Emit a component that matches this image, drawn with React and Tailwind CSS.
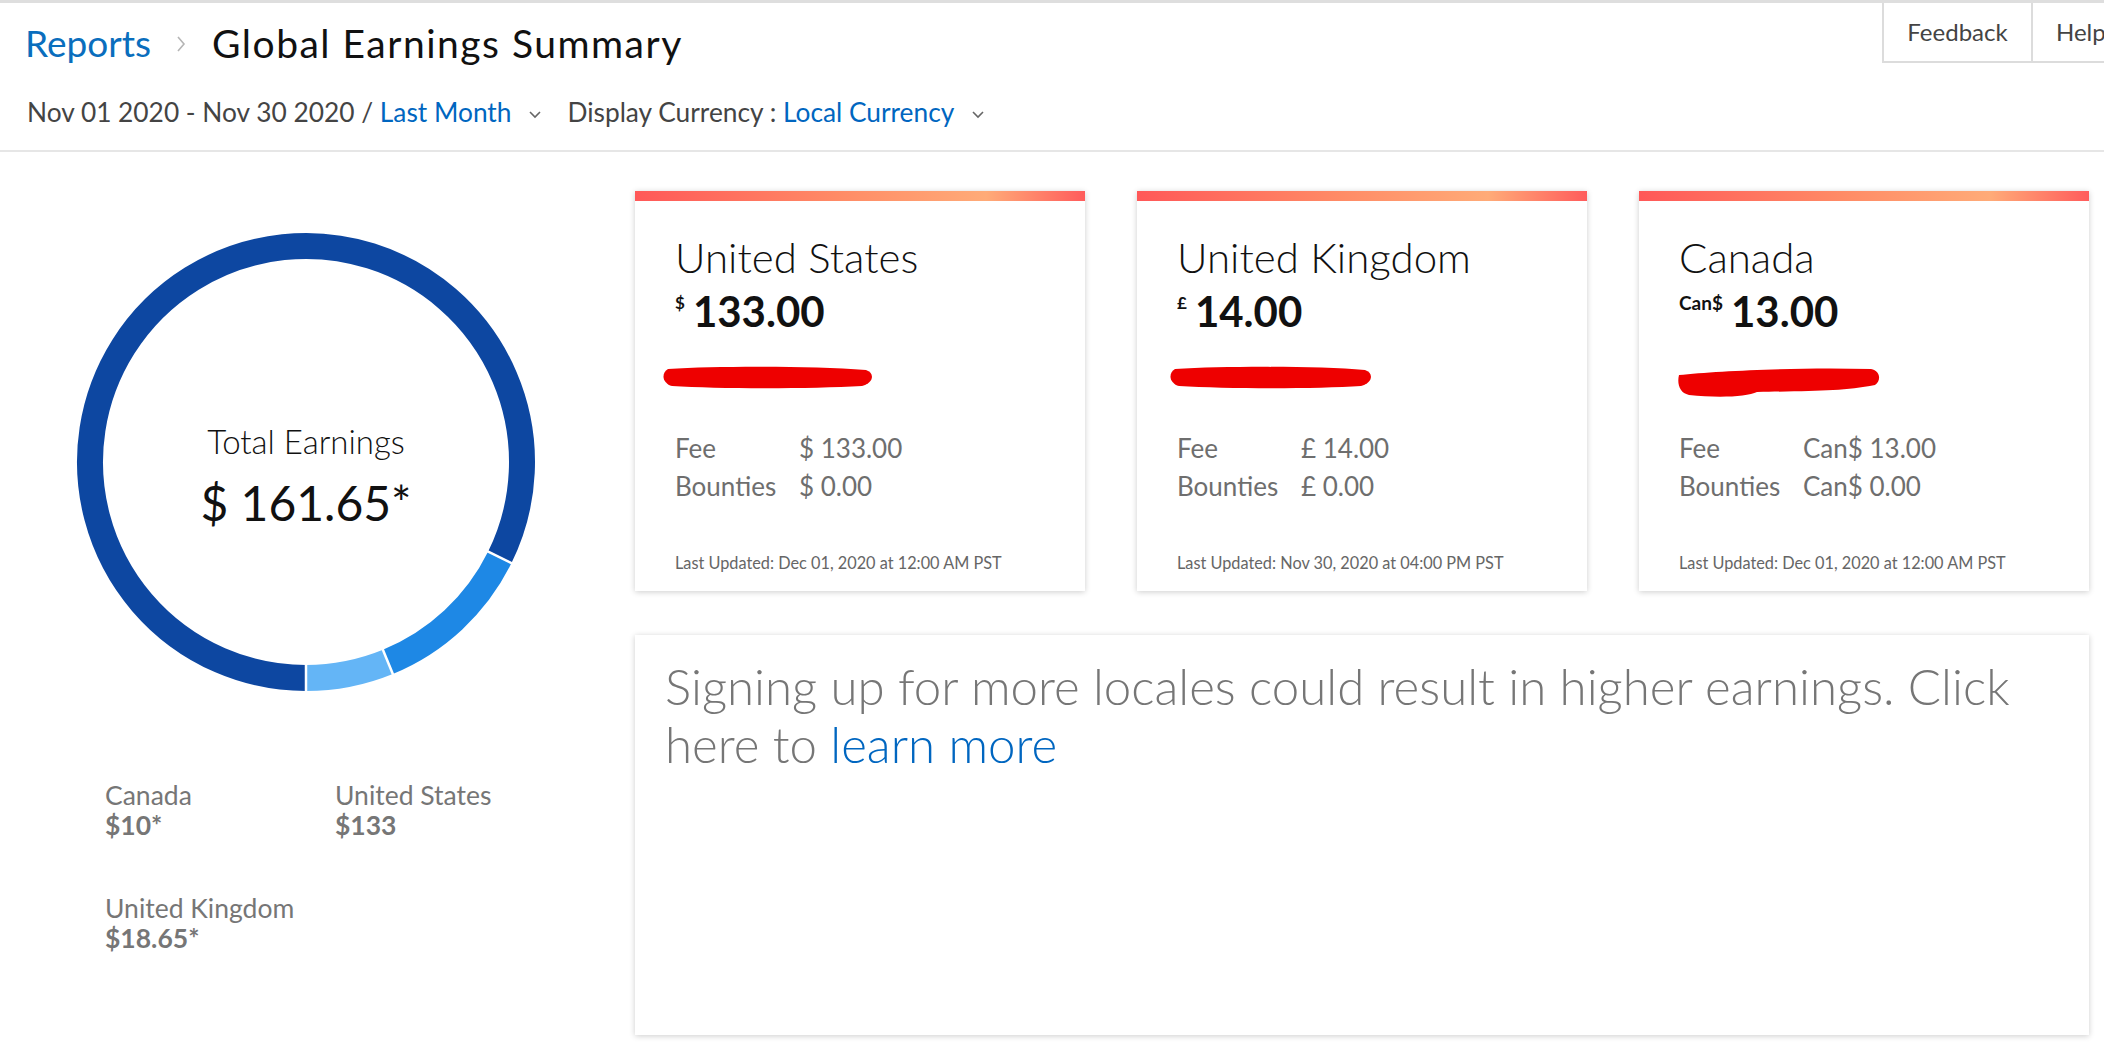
import React from "react";

const C = 230;
const R = 216;
function pt(deg) {
  const a = (deg * Math.PI) / 180;
  return [C + R * Math.cos(a), C + R * Math.sin(a)];
}
function arc(a1, a2) {
  const [x1, y1] = pt(a1);
  const [x2, y2] = pt(a2);
  const large = a1 - a2 > 180 ? 1 : 0;
  return `M ${x1} ${y1} A ${R} ${R} 0 ${large} 0 ${x2} ${y2}`;
}
function sep(deg) {
  const a = (deg * Math.PI) / 180;
  return {
    x1: C + 198 * Math.cos(a),
    y1: C + 198 * Math.sin(a),
    x2: C + 234 * Math.cos(a),
    y2: C + 234 * Math.sin(a),
  };
}

function Donut() {
  const total = 161.65;
  const ca = (10 / total) * 360;
  const uk = (18.65 / total) * 360;
  const a0 = 90;
  const a1 = a0 - ca;
  const a2 = a1 - uk;
  const a3 = -270;
  return (
    <div className="relative w-[460px] h-[460px]">
      <svg width="460" height="460" viewBox="0 0 460 460">
        <path d={arc(a0, a1)} stroke="#64b5f6" strokeWidth="26" fill="none" />
        <path d={arc(a1, a2)} stroke="#1e88e5" strokeWidth="26" fill="none" />
        <path d={arc(a2, a3)} stroke="#0d47a1" strokeWidth="26" fill="none" />
        {[a0, a1, a2].map((d, i) => (
          <line key={i} {...sep(d)} stroke="#ffffff" strokeWidth="2.5" />
        ))}
      </svg>
      <div className="absolute inset-0 flex flex-col items-center pt-[189px]">
        <div className="text-[33px] leading-[40px] font-light text-[#111]">Total Earnings</div>
        <div className="text-[48px] leading-[56px] font-normal text-[#111] mt-[14px]">$ 161.65*</div>
      </div>
    </div>
  );
}

function Blob({ w, h, variant }) {
  if (variant === 3) {
    return (
      <svg width={w} height={h} viewBox={`0 0 ${w} ${h}`}>
        <path
          d={`M2 10 C 40 6, 120 2, ${w - 12} 4 C ${w - 2} 6, ${w - 2} 16, ${w - 8} 20 C ${w - 40} 26, 140 26, 80 27 C 70 32, 40 33, 12 30 C 2 28, 0 18, 2 10 Z`}
          fill="#ee0000"
        />
      </svg>
    );
  }
  return (
    <svg width={w} height={h} viewBox={`0 0 ${w} ${h}`}>
      <path
        d={`M8 4 C 60 1, 150 1, ${w - 10} 5 C ${w - 1} 8, ${w - 2} 18, ${w - 14} 21 C 150 24, 60 24, 12 21 C 2 18, 1 8, 8 4 Z`}
        fill="#ee0000"
      />
    </svg>
  );
}

function Card({ name, sym, symSize, amount, fee, bounties, updated, blob }) {
  return (
    <div className="w-[450px] h-[400px] bg-white shadow-[0_1px_6px_rgba(0,0,0,0.2)] flex flex-col">
      <div className="h-[10px] bg-[linear-gradient(90deg,#ff5858_0%,#ff8b66_45%,#ffab78_78%,#ff5c5c_100%)]" />
      <div className="pl-[40px] pt-[32px] flex flex-col">
        <div className="text-[42px] leading-[48px] font-light text-[#111]">{name}</div>
        <div className="flex items-start mt-[6px] h-[48px]">
          <span className={`${symSize} font-bold text-[#111] mt-[6px] mr-[8px]`}>{sym}</span>
          <span className="text-[42px] leading-[48px] font-bold text-[#111]">{amount}</span>
        </div>
        <div className="h-[30px] mt-[30px]" style={{ marginLeft: blob.dx }}>
          <Blob w={blob.w} h={blob.h} variant={blob.v} />
        </div>
        <div className="grid grid-cols-[124px_1fr] text-[26px] leading-[38px] text-[#6e6e6e] mt-[34px]">
          <div>Fee</div>
          <div>{fee}</div>
          <div>Bounties</div>
          <div>{bounties}</div>
        </div>
        <div className="text-[16.3px] leading-[20px] text-[#666] mt-[48px]">{updated}</div>
      </div>
    </div>
  );
}

function Chevron() {
  return (
    <svg width="14" height="10" viewBox="0 0 14 10" className="ml-[17px] mr-[25px] mt-[6px]">
      <path d="M2 2 L7 7 L12 2" stroke="#666" strokeWidth="1.6" fill="none" />
    </svg>
  );
}

export default function App() {
  return (
    <div
      className="w-[2104px] h-[1045px] bg-white overflow-hidden flex flex-col"
      style={{ fontFamily: "Lato, 'Open Sans', sans-serif" }}
    >
      <div className="h-[152px] border-t-[3px] border-t-[#dedede] border-b-2 border-b-[#e6e6e6] flex shrink-0">
        <div className="flex-1 flex flex-col pl-[25px]">
          <div className="flex items-center mt-[18px] h-[44px]">
            <span className="text-[37px] leading-[44px] text-[#0a6ebd]">Reports</span>
            <svg width="12" height="18" viewBox="0 0 12 18" className="ml-[24px] mr-[25px] mt-[2px]">
              <path d="M3 2 L9 9 L3 16" stroke="#b5b5b5" strokeWidth="1.6" fill="none" />
            </svg>
            <span className="text-[39px] leading-[44px] tracking-[1.5px] text-[#111]">Global Earnings Summary</span>
          </div>
          <div className="flex items-center mt-[31px] h-[32px] pl-[2px] text-[26.3px] leading-[32px] text-[#444]">
            <span>Nov 01 2020 - Nov 30 2020 /&nbsp;</span>
            <span className="text-[#0066c0]">Last Month</span>
            <Chevron />
            <span>Display Currency :&nbsp;</span>
            <span className="text-[#0066c0]">Local Currency</span>
            <Chevron />
          </div>
        </div>
        <div className="w-[222px] shrink-0 overflow-hidden flex items-start">
          <div className="flex h-[60px] border-l-2 border-b-2 border-[#dcdcdc] shrink-0">
            <div className="w-[149px] flex items-center justify-center text-[24px] text-[#444] border-r-2 border-[#dcdcdc]">
              Feedback
            </div>
            <div className="w-[110px] flex items-center pl-[23px] text-[24px] text-[#444]">Help</div>
          </div>
        </div>
      </div>

      <div className="flex flex-1">
        <div className="w-[635px] shrink-0 flex flex-col">
          <div className="ml-[76px] mt-[80px]">
            <Donut />
          </div>
          <div className="ml-[105px] mt-[88px] grid grid-cols-[230px_200px] gap-y-[53px] text-[26.5px] leading-[30px] text-[#767676]">
            <div>
              <div>Canada</div>
              <div className="font-bold">$10*</div>
            </div>
            <div>
              <div>United States</div>
              <div className="font-bold">$133</div>
            </div>
            <div>
              <div>United Kingdom</div>
              <div className="font-bold">$18.65*</div>
            </div>
          </div>
        </div>

        <div className="flex-1 pr-[15px] pt-[39px] flex flex-col gap-[44px]">
          <div className="flex gap-[52px]">
            <Card
              name="United States"
              sym="$"
              symSize="text-[17px] leading-[20px]"
              amount="133.00"
              fee="$ 133.00"
              bounties="$ 0.00"
              updated="Last Updated: Dec 01, 2020 at 12:00 AM PST"
              blob={{ dx: -15, w: 216, h: 24, v: 1 }}
            />
            <Card
              name="United Kingdom"
              sym="£"
              symSize="text-[17px] leading-[20px]"
              amount="14.00"
              fee="£ 14.00"
              bounties="£ 0.00"
              updated="Last Updated: Nov 30, 2020 at 04:00 PM PST"
              blob={{ dx: -10, w: 208, h: 24, v: 1 }}
            />
            <Card
              name="Canada"
              sym="Can$"
              symSize="text-[19px] leading-[20px]"
              amount="13.00"
              fee="Can$ 13.00"
              bounties="Can$ 0.00"
              updated="Last Updated: Dec 01, 2020 at 12:00 AM PST"
              blob={{ dx: -2, w: 206, h: 34, v: 3 }}
            />
          </div>
          <div className="w-[1454px] h-[400px] bg-white shadow-[0_1px_6px_rgba(0,0,0,0.2)] px-[30px] pt-[22px]">
            <div className="text-[49.2px] leading-[58px] font-light text-[#767676]">
              Signing up for more locales could result in higher earnings. Click here to{" "}
              <span className="text-[#0066c0]">learn more</span>
            </div>
          </div>
        </div>
      </div>
    </div>
  );
}
